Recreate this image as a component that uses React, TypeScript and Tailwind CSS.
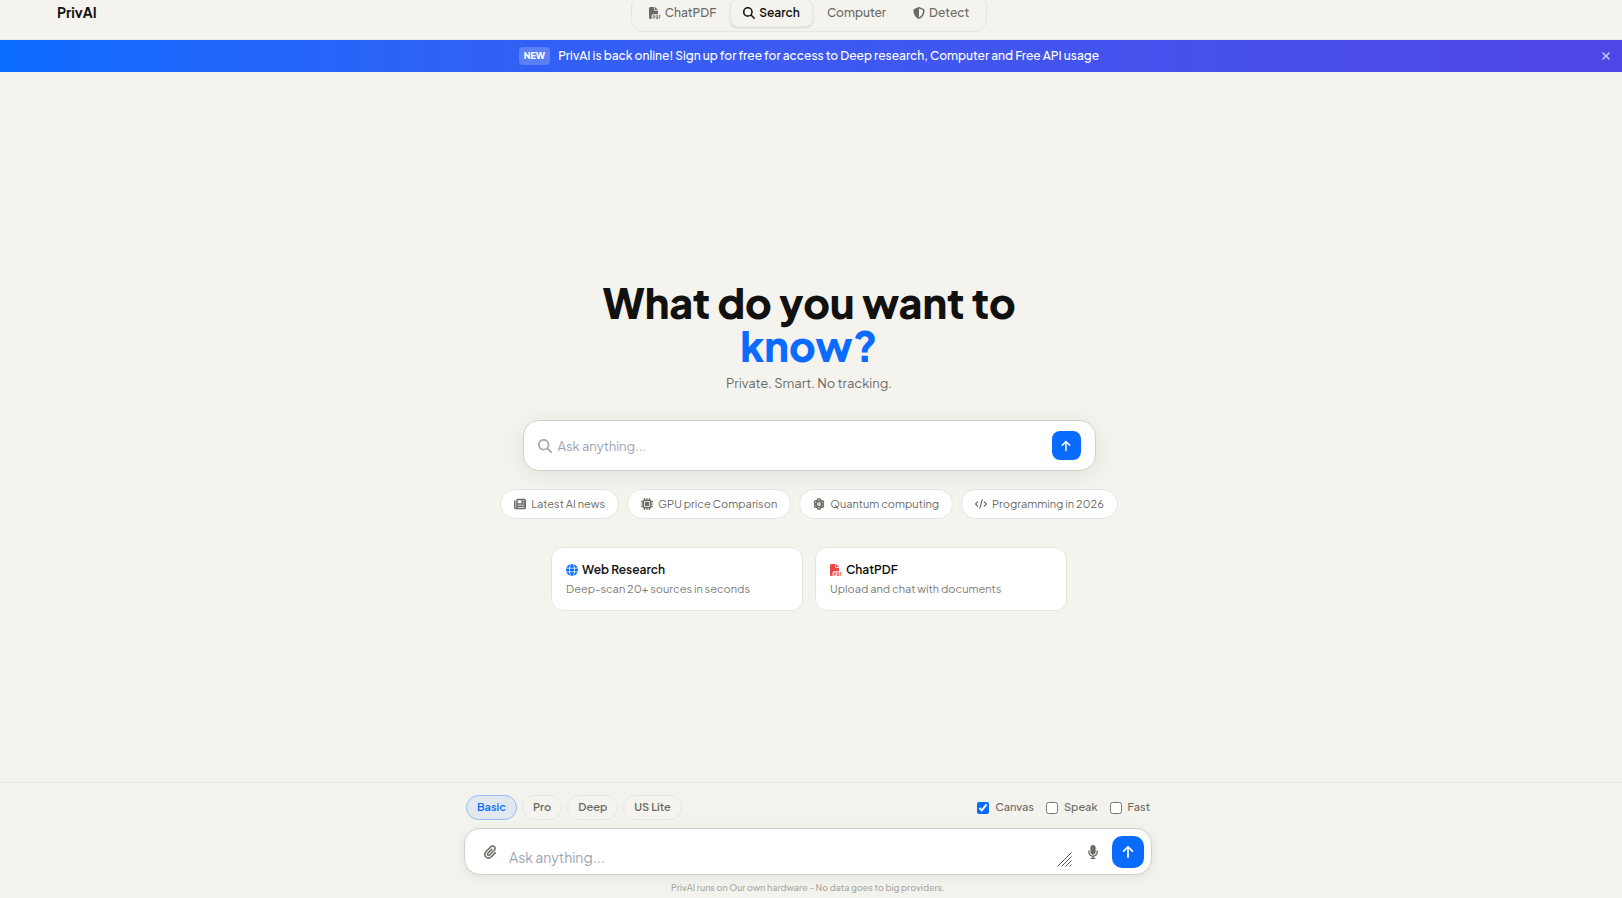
import { useState } from 'react';
import type { IconType } from 'react-icons';
import {
  FaArrowUp,
  FaAtom,
  FaCode,
  FaFilePdf,
  FaGlobe,
  FaMagnifyingGlass,
  FaMicrochip,
  FaMicrophone,
  FaNewspaper,
  FaPaperclip,
  FaShieldHalved,
  FaXmark,
} from 'react-icons/fa6';

const tabs: { label: string; icon?: IconType }[] = [
  { label: 'ChatPDF', icon: FaFilePdf },
  { label: 'Search', icon: FaMagnifyingGlass },
  { label: 'Computer' },
  { label: 'Detect', icon: FaShieldHalved },
];

const suggestions: { label: string; icon: IconType }[] = [
  { label: 'Latest AI news', icon: FaNewspaper },
  { label: 'GPU price Comparison', icon: FaMicrochip },
  { label: 'Quantum computing', icon: FaAtom },
  { label: 'Programming in 2026', icon: FaCode },
];

const modes = ['Basic', 'Pro', 'Deep', 'US Lite'];

function Header() {
  const [active, setActive] = useState('Search');

  return (
    <header className="grid h-10 grid-cols-[1fr_auto_1fr] content-end items-end overflow-hidden border-b border-[#e9e7e2] pr-1 pb-[7px]">
      <a href="#" className="pb-2.5 pl-[57px] text-sm leading-5 font-bold text-[#111110]">
        PrivAI
      </a>
      <nav className="flex gap-px rounded-xl border border-[#e8e6e1] p-1">
        {tabs.map(({ label, icon: Icon }) => (
          <button
            key={label}
            onClick={() => setActive(label)}
            className={`flex h-7 items-center gap-1 rounded-lg border px-3 text-xs ${
              active === label
                ? 'border-[#eae8e3] bg-[#f5f3ee] font-semibold text-[#111110] shadow-sm'
                : 'border-transparent font-medium text-[#6b6b66]'
            }`}
          >
            {Icon && <Icon className="size-3" />}
            {label}
          </button>
        ))}
      </nav>
    </header>
  );
}

function Banner() {
  return (
    <div className="relative flex h-8 items-center justify-center gap-2 bg-linear-to-r from-[#0a6cff] to-[#4f46e5] pr-1 text-xs font-medium text-white">
      <span className="rounded-sm bg-white/20 px-[5px] text-[9px] leading-[18px] font-extrabold">NEW</span>
      <p>PrivAI is back online! Sign up for free for access to Deep research, Computer and Free API usage</p>
      <button aria-label="Close" className="absolute right-2.5 text-white/70">
        <FaXmark className="size-3" />
      </button>
    </div>
  );
}

function Hero() {
  return (
    <main className="flex flex-1 flex-col items-center justify-center pt-[38px] pr-1">
      <h1 className="text-center text-[41px] leading-[43px] font-extrabold text-[#111110]">
        What do you want to
        <br />
        <span className="text-[#0a6cff]">know?</span>
      </h1>
      <p className="mt-1.5 text-[13px] leading-5 text-[#6b6b66]">Private. Smart. No tracking.</p>

      <form
        onSubmit={(e) => e.preventDefault()}
        className="mt-[27px] flex h-[51px] w-full max-w-[573px] items-center rounded-2xl border border-[#d3d1ca] bg-white px-3.5 shadow-[0_4px_24px_rgba(0,0,0,0.08)]"
      >
        <FaMagnifyingGlass className="size-3.5 text-[#a8a8a0]" />
        <input
          type="text"
          aria-label="Search"
          placeholder="Ask anything..."
          className="min-w-0 flex-1 px-1.5 pt-0.5 text-[13px] outline-none placeholder:text-[#9ca3af]"
        />
        <button
          aria-label="Search"
          className="flex size-[29px] items-center justify-center rounded-lg bg-[#0a6cff] text-white"
        >
          <FaArrowUp className="size-3" />
        </button>
      </form>

      <div className="mt-[18px] flex flex-wrap justify-center gap-2">
        {suggestions.map(({ label, icon: Icon }) => (
          <button
            key={label}
            className="flex h-[30px] items-center gap-[5px] rounded-full border border-[#e8e6e1] bg-white px-[13px] text-[11px] text-[#6b6b66]"
          >
            <Icon className="size-3" />
            {label}
          </button>
        ))}
      </div>

      <div className="mt-7 grid w-full max-w-[516px] grid-cols-2 gap-3">
        <a href="#" className="rounded-xl border border-[#e8e6e1] bg-white px-3.5 py-3">
          <h2 className="flex items-center gap-1 text-xs leading-5 font-semibold text-[#111110]">
            <FaGlobe className="size-3 text-[#0a6cff]" />
            Web Research
          </h2>
          <p className="text-[11px] leading-[18px] text-[#7b7b76]">Deep-scan 20+ sources in seconds</p>
        </a>
        <a href="#" className="rounded-xl border border-[#e8e6e1] bg-white px-3.5 py-3">
          <h2 className="flex items-center gap-1 text-xs leading-5 font-semibold text-[#111110]">
            <FaFilePdf className="size-3 text-[#ef4444]" />
            ChatPDF
          </h2>
          <p className="text-[11px] leading-[18px] text-[#7b7b76]">Upload and chat with documents</p>
        </a>
      </div>
    </main>
  );
}

function Composer() {
  const [mode, setMode] = useState('Basic');

  return (
    <footer className="border-t border-[#e6e6e1] bg-[#f3f3ee] pt-3 pr-1.5 pb-[3px]">
      <div className="mx-auto max-w-[688px]">
        <div className="flex items-center justify-between px-0.5">
          <div className="flex gap-[5px]">
            {modes.map((m) => (
              <button
                key={m}
                onClick={() => setMode(m)}
                className={`h-[25px] rounded-full border px-2.5 text-[11px] font-semibold ${
                  mode === m
                    ? 'border-[#93bdf8] bg-[#e1e8ef] text-[#0a6cff]'
                    : 'border-[#e8e6e1] bg-[#f5f3ee] text-[#6b6b66]'
                }`}
              >
                {m}
              </button>
            ))}
          </div>
          <div className="flex gap-3 text-[11px] font-medium text-[#6b6b66]">
            {['Canvas', 'Speak', 'Fast'].map((option) => (
              <label key={option} className="flex items-center gap-1.5">
                <input type="checkbox" defaultChecked={option === 'Canvas'} className="size-3 accent-[#0a6cff]" />
                {option}
              </label>
            ))}
          </div>
        </div>

        <form
          onSubmit={(e) => e.preventDefault()}
          className="mt-2 flex h-[47px] items-center rounded-2xl border border-[#d3d1ca] bg-white pr-[7px] pl-[18px] shadow-[0_2px_10px_rgba(0,0,0,0.08)]"
        >
          <button type="button" aria-label="Attach file" className="text-[#6b6b66]">
            <FaPaperclip className="size-3.5" />
          </button>
          <textarea
            rows={1}
            aria-label="Message"
            placeholder="Ask anything..."
            className="h-8 min-w-0 flex-1 resize-none pt-[11px] pl-3 text-sm leading-5 outline-none placeholder:text-[#9ca3af]"
          />
          <svg viewBox="0 0 15 15" className="mb-[7px] size-[15px] self-end" stroke="#555" fill="none">
            <path d="M.5 14.5l14-14M4.5 14.5l10-10M8.5 14.5l6-6M12.5 14.5l2-2" />
          </svg>
          <button type="button" aria-label="Voice input" className="pr-3 pl-3.5 text-[#6b6b66]">
            <FaMicrophone className="size-3.5" />
          </button>
          <button aria-label="Send" className="flex size-8 items-center justify-center rounded-[10px] bg-[#0a6cff] text-white">
            <FaArrowUp className="size-3.5" />
          </button>
        </form>

        <p className="mt-1.5 text-center text-[9px] leading-[14px] font-medium text-[#a8a8a0]">
          PrivAI runs on Our own hardware - No data goes to big providers.
        </p>
      </div>
    </footer>
  );
}

export default function App() {
  return (
    <div className="flex min-h-screen flex-col bg-[#f5f3ee] font-['Plus_Jakarta_Sans',Inter,sans-serif]">
      <Header />
      <Banner />
      <Hero />
      <Composer />
    </div>
  );
}
